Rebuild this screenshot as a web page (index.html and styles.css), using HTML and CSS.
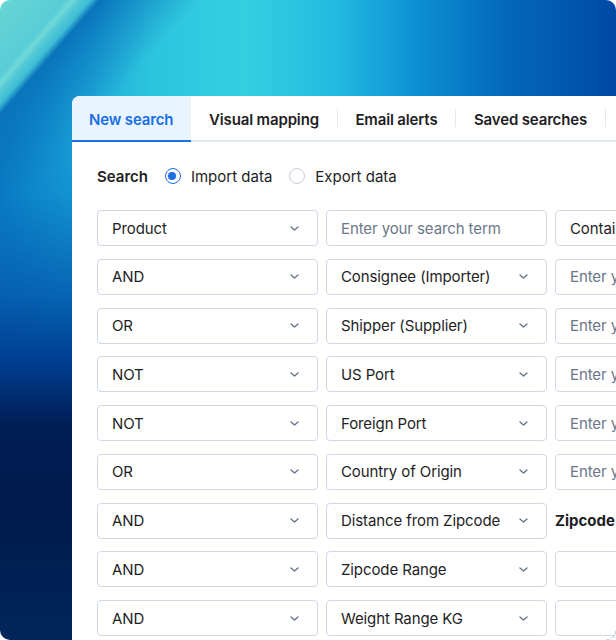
FILE: index.html
```html
<!DOCTYPE html>
<html>
<head>
<meta charset="utf-8">
<link rel="stylesheet" href="styles.css">
</head>
<body>
<div class="frame">
  <div class="card">
    <div class="tabs">
      <div class="tab active">New search</div>
      <div class="tab">Visual mapping</div>
      <span class="sep"></span>
      <div class="tab">Email alerts</div>
      <span class="sep"></span>
      <div class="tab">Saved searches</div>
      <span class="sep"></span>
      <div class="tab">Reports</div>
    </div>
    <div class="body">
      <div class="search-row">
        <span class="search-label">Search</span>
        <label class="radio"><span class="dot on"></span>Import data</label>
        <label class="radio"><span class="dot"></span>Export data</label>
      </div>
      <div class="grid">
        <div class="field sel">Product<svg class="chev" viewBox="0 0 9 5"><path d="M1 1l3.5 3 3.5-3"/></svg></div>
        <div class="field ph">Enter your search term</div>
        <div class="field sel">Contains<svg class="chev" viewBox="0 0 9 5"><path d="M1 1l3.5 3 3.5-3"/></svg></div>

        <div class="field sel">AND<svg class="chev" viewBox="0 0 9 5"><path d="M1 1l3.5 3 3.5-3"/></svg></div>
        <div class="field sel">Consignee (Importer)<svg class="chev" viewBox="0 0 9 5"><path d="M1 1l3.5 3 3.5-3"/></svg></div>
        <div class="field ph">Enter your search term</div>

        <div class="field sel">OR<svg class="chev" viewBox="0 0 9 5"><path d="M1 1l3.5 3 3.5-3"/></svg></div>
        <div class="field sel">Shipper (Supplier)<svg class="chev" viewBox="0 0 9 5"><path d="M1 1l3.5 3 3.5-3"/></svg></div>
        <div class="field ph">Enter your search term</div>

        <div class="field sel">NOT<svg class="chev" viewBox="0 0 9 5"><path d="M1 1l3.5 3 3.5-3"/></svg></div>
        <div class="field sel">US Port<svg class="chev" viewBox="0 0 9 5"><path d="M1 1l3.5 3 3.5-3"/></svg></div>
        <div class="field ph">Enter your search term</div>

        <div class="field sel">NOT<svg class="chev" viewBox="0 0 9 5"><path d="M1 1l3.5 3 3.5-3"/></svg></div>
        <div class="field sel">Foreign Port<svg class="chev" viewBox="0 0 9 5"><path d="M1 1l3.5 3 3.5-3"/></svg></div>
        <div class="field ph">Enter your search term</div>

        <div class="field sel">OR<svg class="chev" viewBox="0 0 9 5"><path d="M1 1l3.5 3 3.5-3"/></svg></div>
        <div class="field sel">Country of Origin<svg class="chev" viewBox="0 0 9 5"><path d="M1 1l3.5 3 3.5-3"/></svg></div>
        <div class="field ph">Enter your search term</div>

        <div class="field sel">AND<svg class="chev" viewBox="0 0 9 5"><path d="M1 1l3.5 3 3.5-3"/></svg></div>
        <div class="field sel">Distance from Zipcode<svg class="chev" viewBox="0 0 9 5"><path d="M1 1l3.5 3 3.5-3"/></svg></div>
        <div class="label-cell">Zipcode</div>

        <div class="field sel">AND<svg class="chev" viewBox="0 0 9 5"><path d="M1 1l3.5 3 3.5-3"/></svg></div>
        <div class="field sel">Zipcode Range<svg class="chev" viewBox="0 0 9 5"><path d="M1 1l3.5 3 3.5-3"/></svg></div>
        <div class="field"></div>

        <div class="field sel">AND<svg class="chev" viewBox="0 0 9 5"><path d="M1 1l3.5 3 3.5-3"/></svg></div>
        <div class="field sel">Weight Range KG<svg class="chev" viewBox="0 0 9 5"><path d="M1 1l3.5 3 3.5-3"/></svg></div>
        <div class="field"></div>
      </div>
    </div>
  </div>
</div>
</body>
</html>
```
FILE: styles.css
```css
html, body {
  margin: 0;
  padding: 0;
  background: #ffffff;
}
.frame {
  width: 616px;
  height: 640px;
  box-sizing: border-box;
  padding: 96px 0 0 72px;
  border-radius: 10px;
  overflow: hidden;
  font-family: Inter, "Noto Sans", sans-serif;
  background:
    linear-gradient(131deg, #68d6d4 0%, #58cdd6 5.6%, #70d9d8 6.2%, #54cad6 6.8%, #3fbdd5 7.7%, #0a74bb 8.5%, rgba(8,112,186,0.6) 11%, rgba(8,112,186,0) 17%),
    linear-gradient(180deg, rgba(0,0,0,0) 0%, rgba(0,0,0,0) 17%, rgba(6,120,200,0.35) 30%, rgba(4,90,175,0.85) 46%, #003c8e 57%, #001c52 67%, #001a4c 80%, #00265a 100%),
    linear-gradient(90deg, #0c7fc6 0%, #1aa3d6 12%, #2cc3de 24%, #35cfe0 40%, #22b8e0 55%, #0c8fd4 68%, #0468bb 82%, #0049a6 100%);
}
.card {
  width: 800px;
  height: 600px;
  background: #ffffff;
  border-top-left-radius: 8px;
  overflow: hidden;
}
.tabs {
  display: flex;
  align-items: center;
  height: 44px;
  border-bottom: 2px solid #e2e8f0;
}
.tab {
  height: 44px;
  display: flex;
  align-items: center;
  padding: 2px 17.75px 0 17.75px;
  font-size: 15px;
  letter-spacing: -0.15px;
  font-weight: 600;
  color: #1e1e24;
  box-sizing: border-box;
  white-space: nowrap;
}
.tab.active {
  color: #1a6ee6;
  background: #e8f4fe;
  border-bottom: 2px solid #1d6fe6;
  margin-bottom: -2px;
  height: 46px;
  padding: 2px 18px 0 17px;
}
.sep {
  width: 1px;
  height: 18px;
  background: #e2e8f0;
}
.body {
  padding: 24px 0 0 25px;
}
.search-row {
  display: flex;
  align-items: center;
  height: 20px;
  font-size: 15px;
  color: #1e1e24;
}
.search-label {
  font-weight: 600;
  margin-right: 17px;
}
.radio {
  display: flex;
  align-items: center;
  margin-right: 17px;
}
.dot {
  width: 16px;
  height: 16px;
  box-sizing: border-box;
  border-radius: 50%;
  border: 1px solid #c5cfdb;
  margin-right: 10px;
  position: relative;
}
.dot.on {
  border: 1.5px solid #1d6fe6;
}
.dot.on::after {
  content: "";
  position: absolute;
  left: 2.5px;
  top: 2.5px;
  width: 8px;
  height: 8px;
  border-radius: 50%;
  background: #1d6fe6;
}
.grid {
  margin-top: 24px;
  display: grid;
  grid-template-columns: 221px 221px 221px;
  grid-auto-rows: 36px;
  column-gap: 8px;
  row-gap: 12.75px;
}
.field {
  box-sizing: border-box;
  border: 1px solid #cfd8e3;
  border-radius: 4px;
  display: flex;
  align-items: center;
  padding: 0 18px 0 14px;
  font-size: 15px;
  letter-spacing: -0.1px;
  color: #1e1e24;
  white-space: nowrap;
  overflow: hidden;
}
.field.sel {
  justify-content: space-between;
}
.field.ph {
  color: #6b7789;
}
.chev {
  width: 9px;
  height: 5px;
  flex: none;
  fill: none;
  stroke: #64748b;
  stroke-width: 1.4;
  stroke-linecap: round;
  stroke-linejoin: round;
}
.label-cell {
  display: flex;
  align-items: center;
  font-size: 15px;
  font-weight: 700;
  color: #1e1e24;
}
```
